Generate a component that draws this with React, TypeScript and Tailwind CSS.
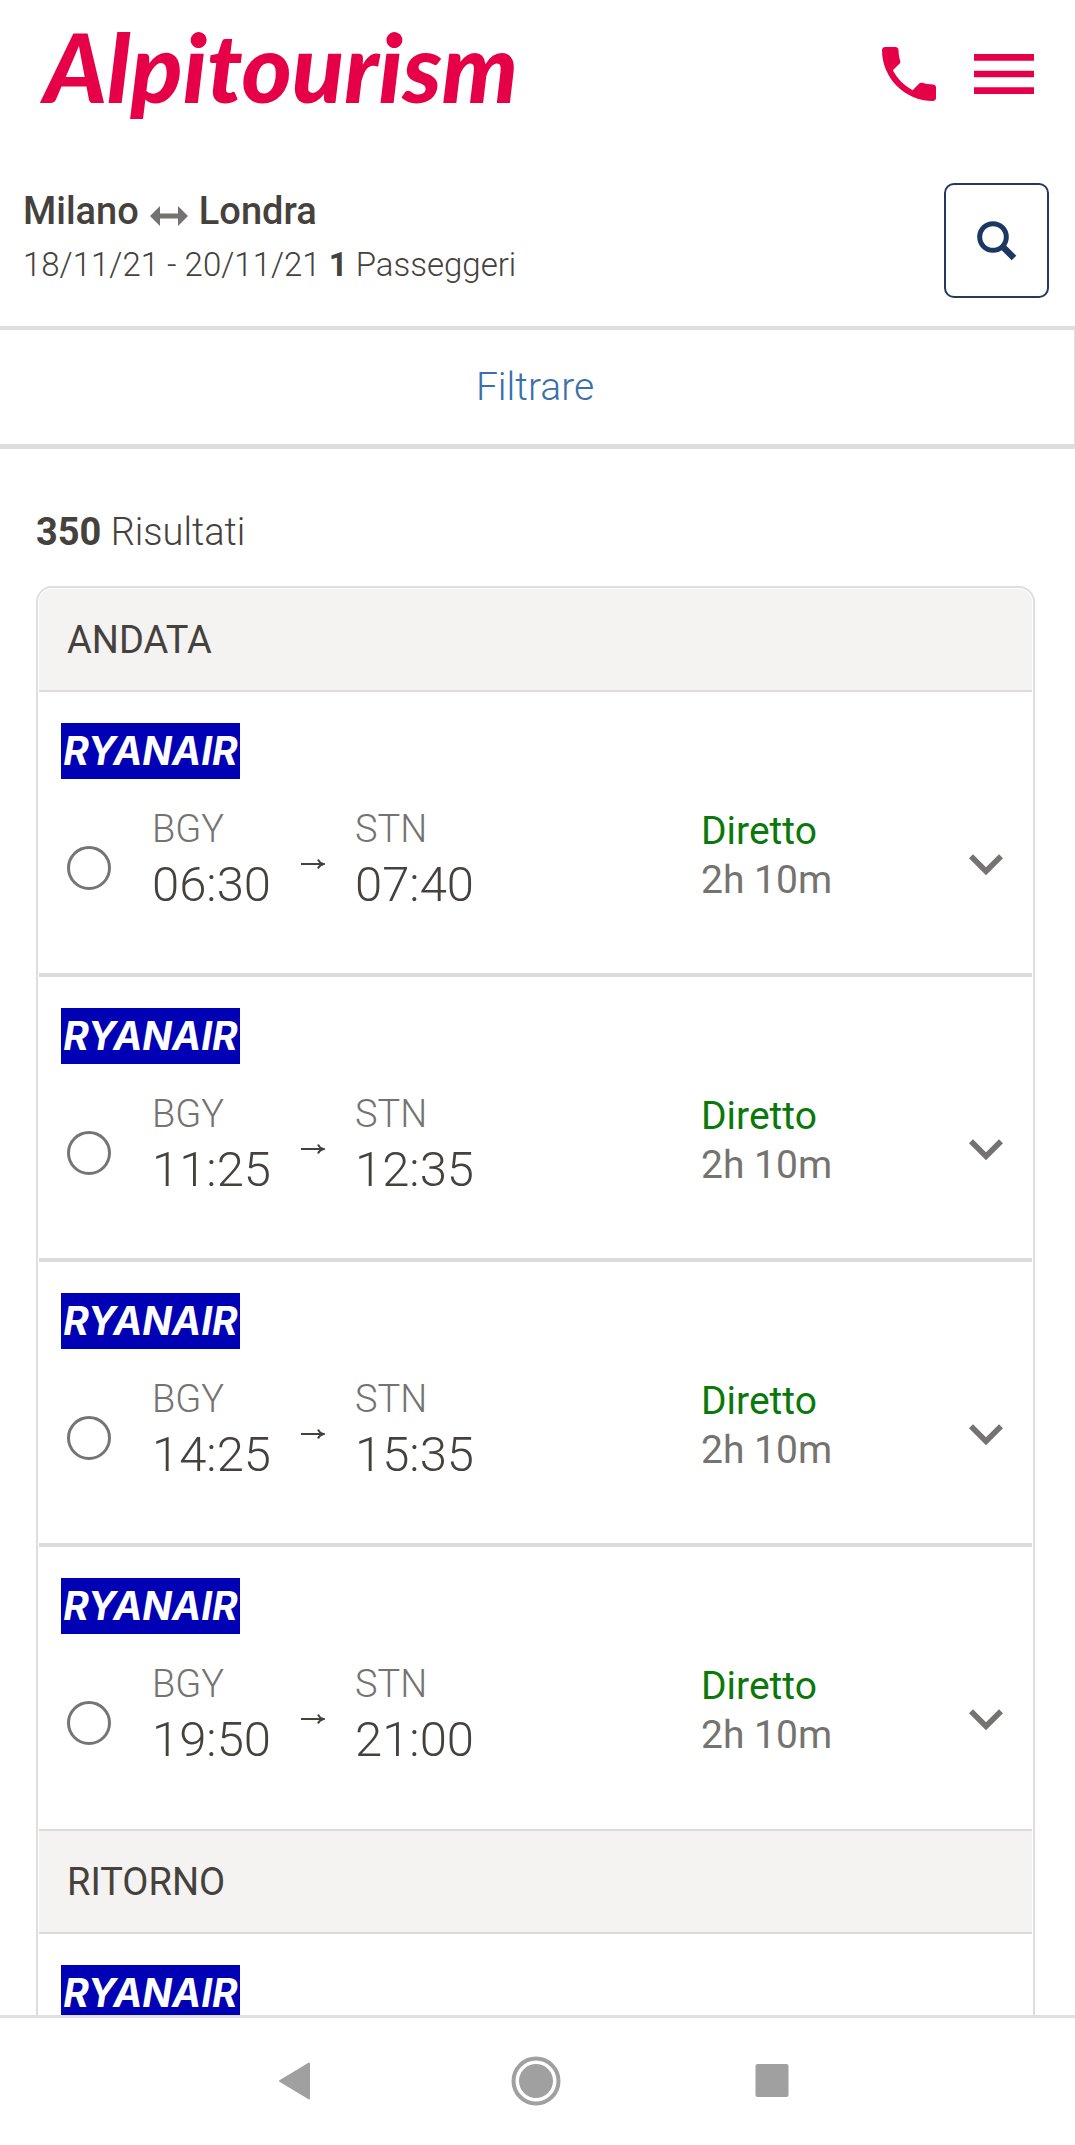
import { useState } from "react";
import { MdExpandMore, MdMenu, MdPhone } from "react-icons/md";

interface Flight {
  id: string;
  from: string;
  to: string;
  departure: string;
  arrival: string;
  duration: string;
}

const outbound: Flight[] = [
  { id: "out-1", from: "BGY", to: "STN", departure: "06:30", arrival: "07:40", duration: "2h 10m" },
  { id: "out-2", from: "BGY", to: "STN", departure: "11:25", arrival: "12:35", duration: "2h 10m" },
  { id: "out-3", from: "BGY", to: "STN", departure: "14:25", arrival: "15:35", duration: "2h 10m" },
  { id: "out-4", from: "BGY", to: "STN", departure: "19:50", arrival: "21:00", duration: "2h 10m" },
];

const Header = () => (
  <header className="flex h-[148px] items-center justify-between pr-[31px] pl-11">
    <a
      href="#"
      className="pb-4 font-['Lato',sans-serif] text-[96px] leading-[120px] font-black text-[#e60048] italic"
    >
      Alpitourism
    </a>
    <div className="flex items-center gap-[19px]">
      <a href="#" aria-label="Telefono" className="text-[#e60048]">
        <MdPhone className="size-[72px]" />
      </a>
      <button type="button" aria-label="Menu" className="text-[#e60048]">
        <MdMenu className="size-20" />
      </button>
    </div>
  </header>
);

const SearchSummary = () => (
  <section className="flex items-start justify-between border-b-4 border-[#dedede] pt-[35px] pr-[26px] pb-7 pl-[23px]">
    <div>
      <h1 className="flex items-center text-[38px] leading-[57px] font-medium">
        Milano
        <svg viewBox="0 0 38 20" className="mx-[11px] mt-2 h-5 w-[38px] text-[#757370]" fill="currentColor">
          <path d="M0 10 10 0v7.500h18V0l10 10-10 10v-7.500H10V20z" />
        </svg>
        Londra
      </h1>
      <p className="text-[33px] leading-[50px] font-light">
        18/11/21 - 20/11/21 <b className="font-bold">1</b> Passeggeri
      </p>
    </div>
    <button
      type="button"
      aria-label="Cerca"
      className="flex h-[115px] w-[105px] items-center justify-center rounded-[10px] border-2 border-[#24395c] text-[#1d3763]"
    >
      <svg viewBox="0 0 40 40" className="size-10" fill="none" stroke="currentColor">
        <circle cx="16" cy="16" r="13.300" strokeWidth="5" />
        <path d="M25 25 37 37" strokeWidth="6.500" />
      </svg>
    </button>
  </section>
);

const RyanairLogo = () => (
  <div className="flex h-14 w-[179px] items-center justify-center bg-[#0000b4] pb-0.5 font-['Inter',sans-serif] text-[39px] leading-none font-bold text-white italic">
    RYANAIR
  </div>
);

interface FlightRowProps {
  flight: Flight;
  group: string;
  selected: boolean;
  onSelect: () => void;
}

const FlightRow = ({ flight, group, selected, onSelect }: FlightRowProps) => (
  <li className="border-b-4 border-[#dddbd9] pt-[31px] pr-3 pb-[58px] pl-[22px] last:border-b-0 last:pb-[59px]">
    <RyanairLogo />
    <div className="mt-[25px] grid grid-cols-[91px_149px_54px_1fr_251px_68px] items-start">
      <input
        type="radio"
        name={group}
        checked={selected}
        onChange={onSelect}
        aria-label={`${flight.from} ${flight.departure} - ${flight.to} ${flight.arrival}`}
        className="mt-[42px] ml-1.5 size-11 appearance-none rounded-full border-[3px] border-[#757575] checked:border-[12px]"
      />
      <div>
        <p className="text-[38px] leading-[51px] font-light text-[#757370]">{flight.from}</p>
        <p className="text-[49px] leading-[60px] font-light">{flight.departure}</p>
      </div>
      <svg viewBox="0 0 24 12" className="mt-[54px] h-3 w-6" fill="none" stroke="currentColor" strokeWidth="2">
        <path d="M0 6h22M17 1.500c1 2.500 2.500 3.700 5.500 4.500-3 .8-4.500 2-5.500 4.500" />
      </svg>
      <div>
        <p className="text-[38px] leading-[51px] font-light text-[#757370]">{flight.to}</p>
        <p className="text-[49px] leading-[60px] font-light">{flight.arrival}</p>
      </div>
      <div className="pt-[3px] text-[39px] leading-[49px]">
        <p className="text-[#0a780a]">Diretto</p>
        <p className="text-[#757370]">{flight.duration}</p>
      </div>
      <button type="button" aria-label="Dettagli" className="mt-[26px] text-[#757370]">
        <MdExpandMore className="size-[68px]" />
      </button>
    </div>
  </li>
);

const GroupTitle = ({ children }: { children: string }) => (
  <h2 className="border-b-2 border-[#dddbd9] bg-[#f4f3f1] px-7 pt-[26px] pb-6 text-[38px] leading-[51px]">
    {children}
  </h2>
);

const NavBar = () => (
  <nav className="flex h-[130px] shrink-0 items-center justify-center border-t-[3px] border-[#e0e0e0] bg-white pr-1 pb-0.5 text-[#a0a0a0]">
    <div className="flex gap-[189px]">
      <button type="button" aria-label="Indietro">
        <svg viewBox="0 0 50 50" className="size-[50px]" fill="currentColor" stroke="currentColor" strokeWidth="2" strokeLinejoin="round">
          <path d="M8 25 37 7.500v35z" />
        </svg>
      </button>
      <button type="button" aria-label="Home">
        <svg viewBox="0 0 50 50" className="size-[50px]">
          <circle cx="25" cy="25" r="22.500" fill="none" stroke="currentColor" strokeWidth="4" />
          <circle cx="25" cy="25" r="17" fill="currentColor" />
        </svg>
      </button>
      <button type="button" aria-label="App recenti">
        <svg viewBox="0 0 50 50" className="size-[50px]" fill="currentColor">
          <rect x="5.500" y="8" width="33" height="33" rx="2" />
        </svg>
      </button>
    </div>
  </nav>
);

export default function App() {
  const [selectedOutbound, setSelectedOutbound] = useState("");

  return (
    <div className="flex h-screen flex-col bg-white font-['Roboto',sans-serif] text-[#45413d]">
      <main className="flex-1 overflow-y-auto [scrollbar-width:none]">
        <Header />
        <SearchSummary />

        <button
          type="button"
          className="block w-full border-r border-b-[5px] border-[#dedede] py-8 pr-1 text-center text-[39px] leading-[50px] font-light text-[#3a70ac]"
        >
          Filtrare
        </button>

        <section className="px-9 pt-[58px] pr-10">
          <p className="mb-[29px] text-[38px] leading-[50px] font-light">
            <b className="font-bold">350</b> Risultati
          </p>

          <div className="overflow-hidden rounded-2xl border-2 border-[#dedede] p-px">
            <div className="overflow-hidden rounded-t-[13px]">
              <GroupTitle>ANDATA</GroupTitle>
              <ul className="border-b-2 border-[#dddbd9]">
                {outbound.map((flight) => (
                  <FlightRow
                    key={flight.id}
                    flight={flight}
                    group="outbound"
                    selected={selectedOutbound === flight.id}
                    onSelect={() => setSelectedOutbound(flight.id)}
                  />
                ))}
              </ul>
              <GroupTitle>RITORNO</GroupTitle>
              <div className="px-[22px] py-[31px]">
                <RyanairLogo />
              </div>
            </div>
          </div>
        </section>
      </main>
      <NavBar />
    </div>
  );
}
